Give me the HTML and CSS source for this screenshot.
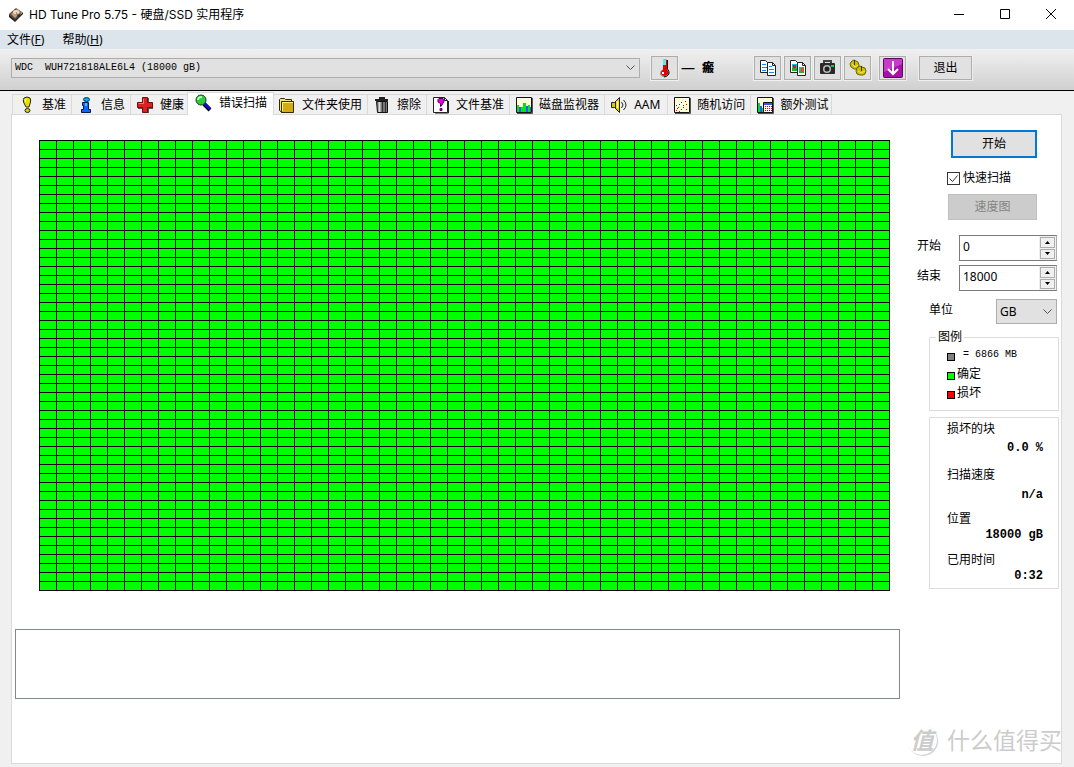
FILE: index.html
```html
<!DOCTYPE html>
<html lang="zh-CN">
<head>
<meta charset="utf-8">
<title>HD Tune Pro 5.75 - 硬盘/SSD 实用程序</title>
<link rel="stylesheet" href="styles.css">
</head>
<body>
<header class="titlebar">
  <svg class="app-icon" width="16" height="16" viewBox="0 0 16 16"><path d="M1 7 8 1l6 4-7 9z" fill="#5b4a42"/><path d="M1 7v3l6 5v-2zM7 13v2l8-8V5z" fill="#222"/><path d="m3 7 6-5 4 3-6 6z" fill="#c79a72"/><ellipse cx="8" cy="5" rx="3" ry="2" fill="#f3dcc3"/><path d="m8 5 2 4" stroke="#777"/><path d="m9 8 3-1 1 1-3 3z" fill="#333"/></svg>
  <h1 class="title">HD Tune Pro 5.75 - 硬盘/SSD 实用程序</h1>
  <div class="window-buttons">
    <button class="window-button" aria-label="最小化"><svg width="12" height="12" viewBox="0 0 12 12"><path d="M1 5.500h10" stroke="#000"/></svg></button>
    <button class="window-button" aria-label="最大化"><svg width="12" height="12" viewBox="0 0 12 12"><path d="M1.500.5h9v9h-9z" stroke="#000" fill="none"/></svg></button>
    <button class="window-button" aria-label="关闭"><svg width="12" height="12" viewBox="0 0 12 12"><path d="m1 0 10 10M11 0 1 10" stroke="#000"/></svg></button>
  </div>
</header>
<nav class="menubar">
  <button class="menu-item">文件(<u>F</u>)</button>
  <button class="menu-item">帮助(<u>H</u>)</button>
</nav>
<div class="toolbar">
  <div class="dropdown drive">
    <select class="dropdown-select mono" aria-label="驱动器"><option>WDC&nbsp; WUH721818ALE6L4 (18000 gB)</option></select>
    <svg class="dropdown-arrow" width="9" height="6" viewBox="0 0 9 6"><path d="m.5.5 4 4 4-4" fill="none" stroke="#555"/></svg>
  </div>
  <button class="tool" aria-label="温度"><svg width="18" height="20" viewBox="0 0 18 20"><path d="M7 2q2-2 4 0v9q3 2 2 5-2 3-5 3-4-1-4-4 0-2 3-4z" fill="#8a8a8a"/><path d="M7 2h4v10q2 2 1 4-2 2-4 2-3-1-3-3 0-2 2-3z" fill="#e60000"/><path d="M7 1.500h3V7H7z" fill="#62e8ec"/><path d="M11.500 2v9q2 2 1.500 5-2 3-5 3" fill="none" stroke="#111"/><path d="M6 14h2v2H6z" fill="#fff"/></svg></button>
  <span class="temperature"><span class="dash">—</span><b class="unit">瘢</b></span>
  <div class="tool-group">
    <button class="tool" aria-label="复制文本"><svg width="18" height="18" viewBox="0 0 18 18"><path d="M1.500 1.500h5l3 3v9h-8z" fill="#fff" stroke="#222"/><path d="M3 5.500h4M3 8.500h5M3 11.500h4" stroke="#1686f0"/><path d="M8.500 3.500h5l3 3v10h-8z" fill="#fff" stroke="#222"/><path d="M13.500 3.500v3h3" fill="none" stroke="#222"/><path d="M10 7.500h3M10 10.500h5M10 13.500h5" stroke="#1686f0"/></svg></button>
    <button class="tool" aria-label="复制图像"><svg width="18" height="18" viewBox="0 0 18 18"><path d="M1.500 1.500h5l3 3v9h-8z" fill="#fff" stroke="#222"/><path d="M3 5h5v7H3z" fill="#00c6dc"/><path d="M4 6h3v3H4z" fill="#e31818"/><path d="M3 9h5v3H3z" fill="#20b020"/><path d="M8.500 3.500h5l3 3v10h-8z" fill="#fff" stroke="#222"/><path d="M13.500 3.500v3h3" fill="none" stroke="#222"/><path d="M10 8h5v6h-5z" fill="#13b8dc"/><path d="M12 9h3v3h-3z" fill="#f04a10"/><path d="M10 12h5v2h-5z" fill="#28b020"/></svg></button>
    <button class="tool" aria-label="截图"><svg width="18" height="18" viewBox="0 0 18 18"><path d="M5 5V2h7v3" fill="none" stroke="#444" stroke-width="2"/><rect x="1" y="4" width="15" height="11" rx="1" fill="#292929"/><circle cx="8" cy="10" r="4" fill="#bbb"/><circle cx="8" cy="10" r="2.500" fill="#222"/><path d="M12 6h3v2h-3z" fill="#00d54a"/></svg></button>
    <button class="tool" aria-label="选项"><svg width="18" height="18" viewBox="0 0 18 18"><g fill="#cdbf00" stroke="#6d6500"><path d="m2 3 1-1 2-1 2 1 2 1 1 3-1 3-2 1H5L2 8 1 5z"/><path d="m8 9 1-1 2-1 2 1 3 1 1 3-1 3-2 1h-3l-3-1-1-3z"/></g><path d="M5.500 1v5M12.500 7v5" stroke="#393600"/><path d="m3 5 3 3 3-2M9 12l3 2 4-2" fill="none" stroke="#f5ed50"/></svg></button>
  </div>
  <button class="tool" aria-label="保存"><svg width="20" height="20" viewBox="0 0 20 20"><rect x=".5" y=".5" width="19" height="19" rx="1" fill="#a811a8" stroke="#5b075b"/><path d="M1 1h18v5L1 14z" fill="#c63bca"/><path d="M10 3v13M5 11l5 5 5-5" fill="none" stroke="#fff" stroke-width="2"/></svg></button>
  <button class="tool exit">退出</button>
</div>
<main class="workspace">
  <div class="tabs" role="tablist">
    <button class="tab" role="tab"><svg width="16" height="16" viewBox="0 0 16 16"><path d="M5 1q3-2 6 0 1 2 .5 4L10 10H7L4.500 5Q4 2 5 1z" fill="#e8de00" stroke="#222"/><path d="M7 2q-1 1-.5 3" stroke="#fff" fill="none"/><ellipse cx="8.500" cy="13.500" rx="2.500" ry="2" fill="#d8cf00" stroke="#222"/></svg>基准</button>
    <button class="tab" role="tab"><svg width="16" height="16" viewBox="0 0 16 16"><path d="M4.500 5.500h6v7h2v3h-9v-3h2v-4h-1z" fill="#1464ff" stroke="#001b4a"/><ellipse cx="8.500" cy="2.500" rx="3" ry="2" fill="#00a9e8" stroke="#00355c"/><path d="M7 6h2v3H7z" fill="#31caff"/></svg>信息</button>
    <button class="tab" role="tab"><svg width="16" height="16" viewBox="0 0 16 16"><path d="M6 1h6v5h4v6h-4v4H6v-4H1V6h5z" fill="#555"/><path d="M5.500.5h5v5h5v5h-5v5h-5v-5h-5v-5h5z" fill="#df2020" stroke="#681010"/><path d="M6.500 2v4.500h-5" fill="none" stroke="#ff7777"/></svg>健康</button>
    <button class="tab selected" role="tab" aria-selected="true"><svg width="18" height="18" viewBox="0 0 18 18"><path d="m10 10 6 6" stroke="#000" stroke-width="4"/><path d="m10 9 6 6" stroke="#1010ce" stroke-width="3"/><circle cx="7" cy="6" r="5" fill="#28cf36" stroke="#173d17"/><path d="M4 6q0-3 4-3" fill="none" stroke="#b8ffbe" stroke-width="2"/></svg>错误扫描</button>
    <button class="tab" role="tab"><svg width="16" height="16" viewBox="0 0 16 16"><path d="M.5 13.500v-11l1-1h4l1 1h6v2" fill="#f5e36b" stroke="#332b00"/><path d="M1 3h3v11H1z" fill="#f5e36b"/><path d="M2.500 4.500h12v11h-12z" fill="#d6aa13" stroke="#332b00"/><path d="M3.500 14V5.500H14" fill="none" stroke="#fff28c"/><path d="M.5 13.500 3 15.500" stroke="#332b00"/></svg>文件夹使用</button>
    <button class="tab" role="tab"><svg width="16" height="16" viewBox="0 0 16 16"><path d="M5 1h6M1 3h13" stroke="#222" stroke-width="2"/><path d="M2.500 4.500h11v11h-10z" fill="#777" stroke="#111"/><path d="M5.500 5v10" stroke="#ddd" stroke-width="2"/><path d="M8.500 5v10M11.500 5v10" stroke="#333"/></svg>擦除</button>
    <button class="tab" role="tab"><svg width="16" height="16" viewBox="0 0 16 16"><path d="M.5.5h11l3 3v12H.5z" fill="#fff" stroke="#222"/><path d="M11.500.5v3h3M15.500 4v12H2" fill="none" stroke="#222"/><path d="M5 2.500 6 1.500h4l1 1v2l-3 5H7.500v-3L5 5z" fill="#e000df" stroke="#540054"/><path d="M7 11.500h2v2H7z" fill="#e000df" stroke="#540054"/></svg>文件基准</button>
    <button class="tab" role="tab"><svg width="16" height="16" viewBox="0 0 16 16"><path d="M.5.5h15v15H.5z" fill="#ffffdb" stroke="#111"/><path d="M1 8h2v7H1zM5 10h2v5H5zM7 6h3v9H7zM12 8h2v7h-2z" fill="#00e814"/><path d="M3 10h2v5H3zM10 9h2v6h-2zM14 10h1v5h-1z" fill="#3355ff"/><path d="M16.500 1v15.500H1" fill="none" stroke="#555"/></svg>磁盘监视器</button>
    <button class="tab aam" role="tab"><svg width="16" height="16" viewBox="0 0 16 16"><path d="M.5 5.500h3l5-5v15l-5-5h-3z" fill="#d8cb00" stroke="#222"/><path d="M4.500 5v6" stroke="#222"/><path d="M6.500 4v7" stroke="#fff577" stroke-width="2"/><path d="M10.500 5q3 3 0 6M12.500 3q5 5 0 10" fill="none" stroke="#222"/></svg>AAM</button>
    <button class="tab" role="tab"><svg width="16" height="16" viewBox="0 0 16 16"><path d="M.5.5h15v15H.5z" fill="#ffffd5" stroke="#111"/><path d="M2 13.500h1M5 14.500h1M7 12.500h1M12 12.500h1M4 10.500h1M9 10.500h1M12 7.500h1" stroke="#e00"/><path d="M2 8.500h1M5 7.500h1M7 5.500h1M9 8.500h1M11 4.500h1M3 11.500h1" stroke="#22e"/><path d="M16.500 1v15.500H1" fill="none" stroke="#555"/></svg>随机访问</button>
    <button class="tab" role="tab"><svg width="16" height="16" viewBox="0 0 16 16"><path d="M.5.5h15v15H.5z" fill="#ffffdb" stroke="#111"/><path d="M1 6h2v9H1zM4 11h2v4H4z" fill="#00df22"/><path d="M3 9h2v6H3z" fill="#35f"/><path d="M6.500 5.500h9v10h-9z" fill="#fff" stroke="#111"/><path d="M7 6h8v2H7z" fill="#35f"/><path d="M8 9.500h7M8 11.500h7M8 13.500h7" stroke="#d00" stroke-dasharray="1 1"/><path d="M16.500 1v15.500H1" fill="none" stroke="#555"/></svg>额外测试</button>
  </div>
  <section class="panel" role="tabpanel">
    <div class="scan">
      <div class="block-map" role="img" aria-label="扫描结果"></div>
      <output class="log" aria-label="日志"></output>
    </div>
    <aside class="sidebar">
      <div class="actions">
        <button class="action start">开始</button>
        <label class="quick"><input class="quick-box" type="checkbox" checked><svg class="quick-tick" width="13" height="13" viewBox="0 0 13 13"><path d="m2.500 6.500 3 3 5-6" fill="none" stroke="#333"/></svg><span>快速扫描</span></label>
        <button class="action speed" disabled>速度图</button>
      </div>
      <div class="range">
        <label for="from">开始</label>
        <div class="spinner"><input class="spinner-input" id="from" value="0"><div class="steps"><button class="step" aria-label="增加"><svg width="5" height="3" viewBox="0 0 5 3"><path d="m0 3 2.500-3L5 3z"/></svg></button><button class="step" aria-label="减少"><svg width="5" height="3" viewBox="0 0 5 3"><path d="m0 0 2.500 3L5 0z"/></svg></button></div></div>
        <label for="to">结束</label>
        <div class="spinner"><input class="spinner-input" id="to" value="18000"><div class="steps"><button class="step" aria-label="增加"><svg width="5" height="3" viewBox="0 0 5 3"><path d="m0 3 2.500-3L5 3z"/></svg></button><button class="step" aria-label="减少"><svg width="5" height="3" viewBox="0 0 5 3"><path d="m0 0 2.500 3L5 0z"/></svg></button></div></div>
      </div>
      <div class="units">
        <label for="unit">单位</label>
        <div class="dropdown unit-dropdown">
          <select class="dropdown-select" id="unit"><option>GB</option></select>
          <svg class="dropdown-arrow" width="9" height="6" viewBox="0 0 9 6"><path d="m.5.5 4 4 4-4" fill="none" stroke="#555"/></svg>
        </div>
      </div>
      <fieldset class="legend">
        <legend class="legend-title">图例</legend>
        <ul class="legend-list">
          <li class="legend-item"><i class="swatch"></i><span class="mono block-size">= 6866 MB</span></li>
          <li class="legend-item"><i class="swatch ok"></i>确定</li>
          <li class="legend-item"><i class="swatch damaged"></i>损坏</li>
        </ul>
      </fieldset>
      <dl class="stats">
        <dt>损坏的块</dt><dd class="value">0.0 %</dd>
        <dt>扫描速度</dt><dd class="value">n/a</dd>
        <dt>位置</dt><dd class="value">18000 gB</dd>
        <dt>已用时间</dt><dd class="value">0:32</dd>
      </dl>
    </aside>
  </section>
</main>
<div class="watermark"><span class="watermark-badge">值</span><span>什么值得买</span></div>
</body>
</html>
```
FILE: styles.css
```css
* { box-sizing: border-box; }
body {
  margin: 0;
  min-height: 100vh;
  display: flex;
  flex-direction: column;
  position: relative;
  background: #f0f0f0;
  color: #000;
  font: 12px/16px "Noto Sans", "Noto Sans CJK SC", sans-serif;
}
button, input, select { font: inherit; color: inherit; margin: 0; border-radius: 0; }
button { padding: 0; }
svg { display: block; flex: none; overflow: visible; }
.mono { font-family: "Liberation Mono", "Noto Sans CJK SC", monospace; font-size: 10px; }

.titlebar { display: flex; align-items: center; height: 30px; padding-left: 8px; background: #fff; }
.title { margin: 0 0 0 5px; font-family: Inter, "Noto Sans CJK SC", sans-serif; font-size: 12px; font-weight: 400; flex: 1; }
.window-buttons { display: flex; }
.window-button { width: 46px; height: 30px; display: grid; place-items: center; border: 0; background: none; }

.menubar { display: flex; gap: 18px; height: 19px; padding-left: 7px; background: #dce4ec; }
.menu-item { border: 0; background: none; line-height: 19px; }

.toolbar {
  display: flex;
  align-items: center;
  height: 42px;
  padding: 0 102px 4px 11px;
  border-bottom: 1px solid #000;
  background: linear-gradient(#f0f0f0, #d0d0d0);
}
.dropdown { display: grid; align-items: center; }
.dropdown-select {
  grid-area: 1 / 1;
  width: 100%;
  height: 20px;
  appearance: none;
  padding: 0 20px 0 3px;
  border: 1px solid #adadad;
  background: #e1e1e1;
}
.dropdown-arrow { grid-area: 1 / 1; justify-self: end; margin-right: 5px; pointer-events: none; }
.drive { flex: 1; margin-right: 11px; }
.tool {
  display: grid;
  place-items: center;
  width: 27px;
  height: 24px;
  border: 1px solid #adadad;
  background: #e1e1e1;
  box-shadow: 0 0 0 1px #efefef;
}
.temperature { display: flex; align-items: center; gap: 7px; width: 76px; padding-left: 3px; }
.dash { font-size: 14px; }
.unit { font-weight: 900; }
.tool-group { display: flex; gap: 3px; margin-right: 8px; }
.exit { width: 53px; margin-left: 13px; }

.workspace { flex: 1; display: flex; flex-direction: column; padding: 1px 12px 3px 11px; }
.tabs { display: flex; align-items: flex-end; height: 22px; padding-left: 1px; }
.tab {
  display: flex;
  align-items: center;
  gap: 7px;
  height: 20px;
  padding: 0 5px 0 6px;
  border: solid #d9d9d9;
  border-width: 1px 0 0 1px;
  background: #f0f0f0;
  white-space: nowrap;
}
.tab:last-child { padding-right: 3px; border-right-width: 1px; }
.tab.aam { padding-right: 7px; }
.tab.selected {
  position: relative;
  height: 23px;
  margin: 0 -2px -1px;
  padding: 0 6px 3px;
  border-right-width: 1px;
  background: #fff;
}
.panel { flex: 1; display: flex; border: 1px solid #d9d9d9; background: #fff; }
.scan { flex: 1; padding: 25px 0 0 3px; }
.block-map {
  width: 851px;
  height: 451px;
  margin-left: 24px;
  background:
    linear-gradient(#000, #000) 0 0 / 1px 100% no-repeat,
    linear-gradient(90deg, #000 1px, transparent 1px) 0 0 / 17px 9px,
    linear-gradient(#000 1px, #0f0 1px) 0 0 / 17px 9px;
}
.log { display: block; height: 70px; margin-top: 38px; border: 1px solid #828790; }

.sidebar { width: 161px; padding: 15px 2px 0 17px; }
.actions { display: flex; flex-direction: column; align-items: flex-end; padding-right: 22px; }
.action { border: 1px solid #adadad; background: #e1e1e1; }
.start { width: 86px; height: 28px; border: 2px solid #0078d7; }
.quick { display: grid; grid-template-columns: 13px auto; column-gap: 3px; align-items: center; width: 90px; height: 16px; margin: 12px 0 8px; }
.quick-box { grid-area: 1 / 1; width: 13px; height: 13px; margin: 0; appearance: none; border: 1px solid #333; background: #fff; }
.quick-tick { grid-area: 1 / 1; visibility: hidden; pointer-events: none; }
.quick-box:checked + .quick-tick { visibility: visible; }
.speed { width: 89px; height: 26px; border-color: #bfbfbf; background: #ccc; color: #838383; }
.range { display: grid; grid-template-columns: 1fr 98px; row-gap: 4px; margin: 15px 2px 0 0; }
.range label { line-height: 22px; }
.spinner { display: flex; height: 26px; border: 1px solid #7a7a7a; border-right-color: #adadad; background: #fff; }
.spinner-input { flex: 1; min-width: 0; padding: 0 3px 3px; border: 0; background: none; }
.steps { display: flex; flex-direction: column; gap: 1px; width: 17px; padding: 1px; background: #f0f0f0; }
.step { flex: 1; display: grid; place-items: center; border: 1px solid #adadad; background: #f0f0f0; }
.units { display: flex; justify-content: space-between; margin: 8px 2px 0 12px; }
.units label { line-height: 22px; }
.unit-dropdown { width: 61px; }
.unit-dropdown .dropdown-select { height: 25px; }
.legend { min-width: 0; height: 82px; margin: 5px 0 0 12px; padding: 0; border: 1px solid #dcdcdc; }
.legend-title { margin-left: 6px; padding: 0 2px; }
.legend-list { margin: 0; padding: 0 0 0 17px; list-style: none; }
.legend-item { display: flex; align-items: center; gap: 2px; height: 19px; }
.swatch { width: 8px; height: 8px; margin-top: 4px; border: 1px solid #000; background: #808080; }
.ok { background: #0f0; }
.damaged { background: #f00; }
.block-size { margin-left: 6px; }
.stats {
  display: grid;
  grid-template-rows: 19px 27px 20px 24px 16px 25px 16px;
  height: 172px;
  margin: 6px 0 0 12px;
  padding: 3px 15px 0 17px;
  border: 1px solid #dcdcdc;
}
.value { margin: 0; text-align: right; font-family: "Liberation Mono", monospace; font-weight: 700; }

.watermark {
  position: absolute;
  right: 12px;
  bottom: 12px;
  display: flex;
  align-items: center;
  gap: 10px;
  color: #ccc;
  font-size: 23px;
  line-height: 30px;
  pointer-events: none;
}
.watermark-badge { width: 30px; font-style: italic; font-weight: 700; text-align: center; border-radius: 50%; box-shadow: 1px 1px 1px #ccc; }
```
